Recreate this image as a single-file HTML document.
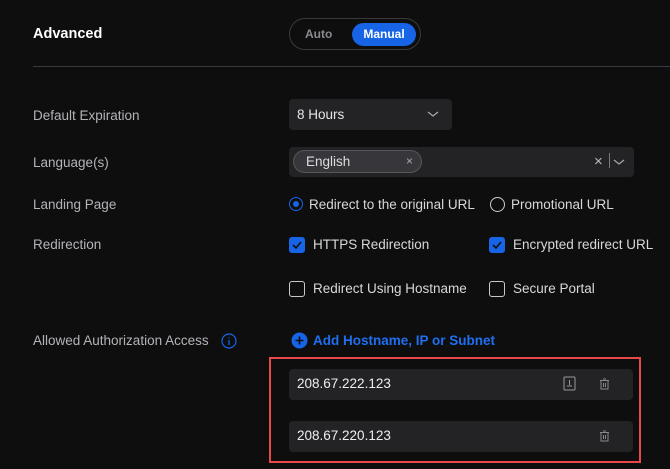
<!DOCTYPE html><html><head><style>
body{margin:0;width:670px;height:469px;background:#0e0e0f;font-family:"Liberation Sans",sans-serif;color:#d8d8da;position:relative;overflow:hidden;font-size:13.5px}
.a{position:absolute}
.lbl{left:33px;color:#b4b4b8;font-size:13.5px}
.cb{width:14px;height:14px;border-radius:3px;box-sizing:border-box}
.off{border:1.3px solid #c8c8cc}
.inp{left:289px;width:344px;height:31px;background:#232326;border-radius:4px}
</style></head><body>
<div class="a" style="left:33px;top:26px;font-weight:bold;color:#fff;font-size:14.5px">Advanced</div>
<div class="a" style="left:289px;top:18px;width:132px;height:32px;border:1px solid #3a3a3e;border-radius:17px;box-sizing:border-box"></div>
<div class="a" style="left:305px;top:27px;color:#8a8a8e;font-size:12px;font-weight:bold">Auto</div>
<div class="a" style="left:352px;top:23px;width:64px;height:23px;background:#1764e6;border-radius:12px;color:#fff;font-size:12px;font-weight:bold;text-align:center;line-height:23px">Manual</div>
<div class="a" style="left:33px;top:66px;width:637px;height:1px;background:#3a3a3e"></div>

<div class="a lbl" style="top:108px">Default Expiration</div>
<div class="a" style="left:289px;top:99px;width:163px;height:31px;background:#232326;border-radius:4px"></div>
<div class="a" style="left:297px;top:107px;color:#e6e6e8">8 Hours</div>
<svg class="a" style="left:427px;top:110px" width="12" height="8"><path d="M1 2l5 4 5-4" stroke="#aaa" fill="none" stroke-width="1.2"/></svg>

<div class="a lbl" style="top:155px">Language(s)</div>
<div class="a" style="left:289px;top:147px;width:345px;height:30px;background:#232326;border-radius:4px"></div>
<div class="a" style="left:293px;top:150px;width:129px;height:23px;background:#37373b;border:1px solid #55555a;border-radius:12px;box-sizing:border-box"></div>
<div class="a" style="left:306px;top:154px;color:#dcdcde">English</div>
<div class="a" style="left:406px;top:154px;color:#aaa;font-size:12px">×</div>
<div class="a" style="left:594px;top:153px;color:#bbb;font-size:15px">×</div>
<div class="a" style="left:609px;top:153px;width:1px;height:15px;background:#777"></div>
<svg class="a" style="left:613px;top:158px" width="12" height="8"><path d="M1 2l5 4 5-4" stroke="#aaa" fill="none" stroke-width="1.2"/></svg>

<div class="a lbl" style="top:197px">Landing Page</div>
<div class="a" style="left:289px;top:197px;width:14px;height:14px;border:1.3px solid #1764e6;border-radius:50%;box-sizing:border-box"></div>
<div class="a" style="left:293px;top:201px;width:6px;height:6px;background:#1764e6;border-radius:50%"></div>
<div class="a" style="left:309px;top:197px">Redirect to the original URL</div>
<div class="a" style="left:490px;top:197px;width:15px;height:15px;border:1.3px solid #ccc;border-radius:50%;box-sizing:border-box"></div>
<div class="a" style="left:511px;top:197px">Promotional URL</div>

<div class="a lbl" style="top:237px">Redirection</div>
<svg class="a" style="left:289px;top:237px" width="16" height="16"><rect width="16" height="16" rx="3" fill="#1764e6"/><path d="M4 8l3 3 5-6" stroke="#0e0e0f" fill="none" stroke-width="1.6"/></svg>
<div class="a" style="left:313px;top:237px">HTTPS Redirection</div>
<svg class="a" style="left:489px;top:237px" width="16" height="16"><rect width="16" height="16" rx="3" fill="#1764e6"/><path d="M4 8l3 3 5-6" stroke="#0e0e0f" fill="none" stroke-width="1.6"/></svg>
<div class="a" style="left:513px;top:237px">Encrypted redirect URL</div>
<div class="a cb off" style="left:289px;top:281px;width:16px;height:16px"></div>
<div class="a" style="left:313px;top:281px">Redirect Using Hostname</div>
<div class="a cb off" style="left:489px;top:281px;width:16px;height:16px"></div>
<div class="a" style="left:513px;top:281px">Secure Portal</div>

<div class="a lbl" style="top:333px">Allowed Authorization Access</div>
<svg class="a" style="left:221px;top:333px" width="16" height="16"><circle cx="8" cy="8" r="7" stroke="#1764e6" fill="none" stroke-width="1.2"/><path d="M8 7v5M8 4.5v1" stroke="#1764e6" stroke-width="1.3"/></svg>
<svg class="a" style="left:291px;top:332px" width="17" height="17"><circle cx="8.5" cy="8.5" r="8" fill="#1764e6"/><path d="M8.5 4.5v8M4.5 8.5h8" stroke="#0e0e0f" stroke-width="1.6"/></svg>
<div class="a" style="left:313px;top:333px;color:#1f6ff0;font-weight:bold">Add Hostname, IP or Subnet</div>

<div class="a" style="left:269px;top:357px;width:372px;height:106px;border:2px solid #e8474c;box-sizing:border-box"></div>
<div class="a inp" style="top:369px"></div>
<div class="a" style="left:297px;top:376px;color:#eee">208.67.222.123</div>
<svg class="a" style="left:563px;top:376px" width="13" height="15"><rect x="1" y="1" width="11" height="13" rx="1" stroke="#999" fill="none"/><path d="M6.5 4v5M4 10h5" stroke="#999"/></svg>
<svg class="a" style="left:599px;top:378px" width="11" height="12"><path d="M1 2.5h9M4 1h3M2 3v8h7V3M4.5 5v4M6.5 5v4" stroke="#888" fill="none"/></svg>
<div class="a inp" style="top:421px"></div>
<div class="a" style="left:297px;top:428px;color:#eee">208.67.220.123</div>
<svg class="a" style="left:599px;top:430px" width="11" height="12"><path d="M1 2.5h9M4 1h3M2 3v8h7V3M4.5 5v4M6.5 5v4" stroke="#888" fill="none"/></svg>
</body></html>
